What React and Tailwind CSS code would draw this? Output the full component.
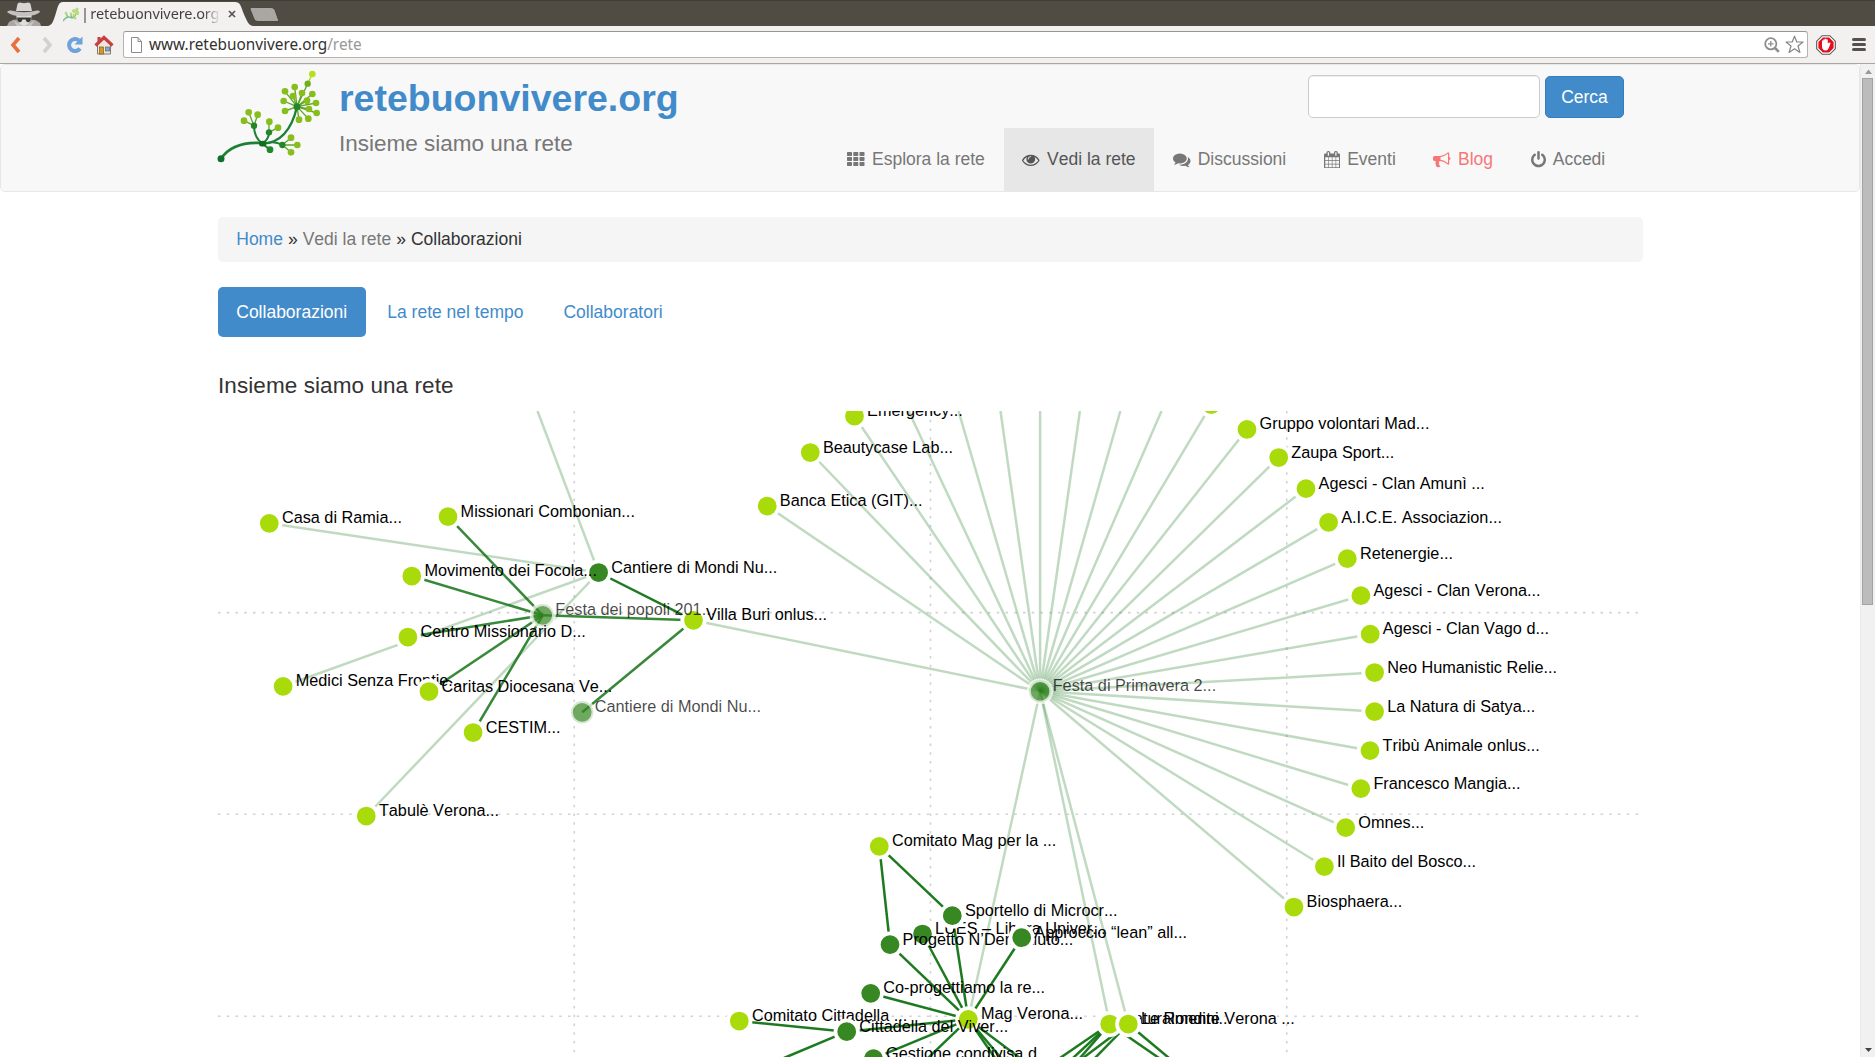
import React from "react";

const LIME = "#a9db0b";
const GREEN = "#378722";

/* Network data, in page coordinates */
const P = {
  casa: [269.3, 523.3, "Casa di Ramia..."],
  missionari: [448, 516.7, "Missionari Combonian..."],
  movimento: [411.8, 576, "Movimento dei Focola..."],
  cantiere: [598.6, 572.5, "Cantiere di Mondi Nu...", "dark"],
  popoli: [542.7, 615.3, "Festa dei popoli 201...", "faded"],
  villa: [693.5, 620.3, "Villa Buri onlus..."],
  centro: [407.9, 637, "Centro Missionario D..."],
  medici: [283.1, 686.3, "Medici Senza Frontie..."],
  caritas: [429, 691.5, "Caritas Diocesana Ve..."],
  cantiere2: [582.2, 712.3, "Cantiere di Mondi Nu...", "faded"],
  cestim: [473.1, 732.5, "CESTIM..."],
  tabule: [366.3, 816, "Tabulè Verona..."],
  primavera: [1040.1, 691.3, "Festa di Primavera 2...", "faded"],
  emergency: [854.5, 416.2, "Emergency..."],
  beauty: [810.3, 452.5, "Beautycase Lab..."],
  banca: [767.2, 506, "Banca Etica (GIT)..."],
  top: [1211.3, 404.6, ""],
  gruppo: [1247, 429.3, "Gruppo volontari Mad..."],
  zaupa: [1278.7, 457.5, "Zaupa Sport..."],
  amuni: [1306, 488.7, "Agesci - Clan Amunì ..."],
  aice: [1328.6, 522.4, "A.I.C.E. Associazion..."],
  retenergie: [1347.3, 558.7, "Retenergie..."],
  clanVerona: [1360.9, 595.7, "Agesci - Clan Verona..."],
  vago: [1370.2, 634.2, "Agesci - Clan Vago d..."],
  neo: [1374.6, 672.5, "Neo Humanistic Relie..."],
  natura: [1374.6, 711.6, "La Natura di Satya..."],
  tribu: [1370, 750.6, "Tribù Animale onlus..."],
  francesco: [1360.8, 788.7, "Francesco Mangia..."],
  omnes: [1345.7, 827.7, "Omnes..."],
  baito: [1324.4, 866.7, "Il Baito del Bosco..."],
  bio: [1294, 907, "Biosphaera..."],
  mag: [968.3, 1019.3, "Mag Verona..."],
  comitatoMag: [879.3, 846.3, "Comitato Mag per la ..."],
  lues: [922.5, 934, "LUES – Libera Univer..."],
  progetto: [890, 944.6, "Progetto N’Dem Aiuto..."],
  sportello: [952.3, 915.7, "Sportello di Microcr..."],
  approccio: [1021.7, 937.7, "Approccio “lean” all..."],
  coprog: [870.7, 993.3, "Co-progettiamo la re..."],
  comitatoCitt: [739.3, 1021, "Comitato Cittadella ..."],
  cittadella: [846.7, 1031.7, "Cittadella del Viver..."],
  gestione: [873.5, 1058.6, "Gestione condivisa d..."],
  naturalmente: [1109.7, 1024, "Naturalmente Verona ..."],
  rondini: [1128.3, 1024, "Le Rondini..."],
};

const DARK = new Set([
  "lues", "progetto", "sportello", "approccio", "coprog", "cittadella", "gestione", "cantiere",
]);

const ORDER = [
  "cantiere", "casa", "missionari", "movimento", "villa", "popoli", "centro", "medici", "caritas",
  "cantiere2", "cestim", "tabule", "primavera", "emergency", "beauty", "banca", "top", "gruppo",
  "zaupa", "amuni", "aice", "retenergie", "clanVerona", "vago", "neo", "natura", "tribu",
  "francesco", "omnes", "baito", "bio", "mag", "comitatoMag", "lues", "progetto", "sportello",
  "approccio", "coprog", "comitatoCitt", "cittadella", "gestione", "naturalmente", "rondini",
];

const LIGHT = [
  ...[
    "villa", "emergency", "beauty", "banca", "top", "gruppo", "zaupa", "amuni", "aice",
    "retenergie", "clanVerona", "vago", "neo", "natura", "tribu", "francesco", "omnes", "baito",
    "bio", "mag", "naturalmente", "rondini",
    [908.6, 411], [958.5, 411], [1000.5, 411], [1040.1, 411], [1079.9, 411], [1120.4, 411],
    [1161.5, 411],
  ].map((t) => ["primavera", t]),
  ["cantiere", "casa"],
  ["cantiere", "medici"],
  ["cantiere", "tabule"],
  ["cantiere", [537.5, 411]],
];

const MID = [
  ["popoli", "missionari"],
  ["popoli", "movimento"],
  ["popoli", "centro"],
  ["popoli", "caritas"],
  ["popoli", "cestim"],
  ["popoli", "villa"],
  ["villa", "cantiere2"],
];

const FULL = [
  ["cantiere", "villa"],
  ["comitatoMag", "progetto"],
  ["comitatoMag", "sportello"],
  ["sportello", "mag"],
  ["lues", "mag"],
  ["progetto", "mag"],
  ["approccio", "mag"],
  ["coprog", "mag"],
  ["comitatoCitt", "cittadella"],
  ["cittadella", "mag"],
  ["gestione", "mag"],
  ["cittadella", [784, 1058]],
  ["mag", [928, 1058]],
  ["mag", [995, 1058]],
  ["mag", [1001, 1058]],
  ["mag", [1020, 1058]],
  ["naturalmente", [1060, 1058]],
  ["naturalmente", [1073, 1058]],
  ["naturalmente", [1080, 1058]],
  ["rondini", [1083, 1058]],
  ["rondini", [1095, 1058]],
  ["naturalmente", [1159, 1058]],
  ["rondini", [1169, 1058]],
];

const pt = (r) => (typeof r === "string" ? P[r] : r);

function Edges({ list, opacity }) {
  return (
    <g stroke="#0b6f0e" strokeOpacity={opacity} strokeWidth="2.5">
      {list.map(([a, b], i) => {
        const [x1, y1] = pt(a);
        const [x2, y2] = pt(b);
        return <line key={i} x1={x1} y1={y1} x2={x2} y2={y2} />;
      })}
    </g>
  );
}

function Network() {
  return (
    <svg
      className="block shrink-0 [font-kerning:none]"
      width="1425"
      height="646"
      viewBox="218 411 1425 646"
      fontFamily='"Liberation Sans", Arial, sans-serif'
      fontSize="16.25"
    >
      <g stroke="#d2d2d2" strokeWidth="1.6" strokeDasharray="2.5 6.25">
        {[574.25, 930.5, 1286.75].map((x) => (
          <line key={x} x1={x} x2={x} y1="411" y2="1057" />
        ))}
        {[612.6, 814.3, 1016.2].map((y) => (
          <line key={y} x1="218" x2="1639" y1={y} y2={y} />
        ))}
      </g>
      <Edges list={LIGHT} opacity={0.26} />
      <Edges list={MID} opacity={0.82} />
      <Edges list={FULL} opacity={0.92} />
      {ORDER.map((k) => {
        const [x, y, label, kind] = P[k];
        const faded = kind === "faded";
        const opacity = faded ? 0.72 : 1;
        return (
          <g key={k} fillOpacity={opacity} strokeOpacity={opacity}>
            <circle
              cx={x}
              cy={y}
              r="11.25"
              fill={faded || DARK.has(k) ? GREEN : LIME}
              stroke="#fff"
              strokeWidth="3.75"
            />
            <text x={x + 12.6} y={y + 0.1} fill="#000">
              {label}
            </text>
          </g>
        );
      })}
    </svg>
  );
}

const LOGO_TIPS = [
  [287, 56], [248, 66], [219, 79], [243, 93], [270, 84], [301, 87], [215, 108], [285, 107],
  [312, 114], [219, 138], [291, 132], [314, 144], [261, 164], [289, 161],
];

function Logo() {
  return (
    <svg className="-ml-1.5 block shrink-0" width="120" height="105" viewBox="0 0 360 315">
      <g fill="none" stroke="#5fa526" strokeWidth="4">
        {LOGO_TIPS.map(([x, y]) => (
          <path key={`${x}-${y}`} d={`M255 125L${x} ${y}`} />
        ))}
        <path d="M287 56L301 27" stroke="#a9db0b" />
        <path d="M126 182L110 142M126 182L96 167M126 182L137 149M171 202V170M171 202L198 188M211 240L237 218M211 240L256 240M211 240L237 262" />
      </g>
      <g fill="none" stroke="#1d8036" strokeLinecap="round">
        <path d="M27 281Q62 228 152 234" strokeWidth="8" />
        <path d="M152 236Q230 232 255 125" strokeWidth="7" />
        <path d="M152 236Q126 218 126 182M152 236Q171 222 171 202M165 234Q190 228 211 240M152 236L174 254" strokeWidth="6" />
      </g>
      <g fill="#86bf1b">
        {LOGO_TIPS.slice(1).map(([x, y]) => (
          <circle key={`${x}-${y}`} cx={x} cy={y} r="10" />
        ))}
        {[[110, 142], [96, 167], [137, 149], [172, 170], [198, 188], [237, 218], [256, 240], [237, 262]].map(([x, y]) => (
          <circle key={`${x}-${y}`} cx={x} cy={y} r="10" />
        ))}
        <circle cx="287" cy="56" r="9.5" fill="#6fae1e" />
        <circle cx="301" cy="27" r="10" fill="#b7e01c" />
      </g>
      <g fill="#23862a">
        <circle cx="255" cy="125" r="10.5" />
        <circle cx="126" cy="182" r="9.5" />
        <circle cx="171" cy="202" r="9.5" />
        <circle cx="211" cy="240" r="9.5" />
        <circle cx="174" cy="254" r="10" />
        <ellipse cx="152" cy="236" rx="11" ry="8.5" fill="#0f6f1d" />
        <circle cx="27" cy="281" r="10.5" fill="#0f6f2a" />
      </g>
    </svg>
  );
}

function Glyph({ d, x = 0, w = 1792 }) {
  return (
    <svg
      className="h-[17.5px] shrink-0"
      style={{ width: (w / 1792) * 17.5 }}
      viewBox={`${x} 0 ${w} 1792`}
      fill="currentColor"
    >
      <path d={d} />
    </svg>
  );
}

const thPath = [96, 608, 1120]
  .flatMap((y) =>
    [0, 640, 1280].map(
      (x) => `M${x + 70} ${y}h372q70 0 70 70v264q0 70-70 70h-372q-70 0-70-70v-264q0-70 70-70z`
    )
  )
  .join("");

const NAV = [
  { label: "Esplora la rete", d: thPath },
  {
    label: "Vedi la rete",
    active: true,
    d: "M1664 960q-152-236-381-353 61 104 61 225 0 185-131.500 316.500t-316.500 131.500-316.500-131.500-131.500-316.500q0-121 61-225-229 117-381 353 133 205 333.500 326.500t434.500 121.500 434.500-121.500 333.500-326.500zm-720-384q0-20-14-34t-34-14q-125 0-214.500 89.500t-89.500 214.500q0 20 14 34t34 14 34-14 14-34q0-86 61-147t147-61q20 0 34-14t14-34zm848 384q0 34-20 69-140 230-376.500 368.500t-499.500 138.500-499.500-139-376.500-368q-20-35-20-69t20-69q140-229 376.500-368t499.500-139 499.500 139 376.500 368q20 35 20 69z",
  },
  {
    label: "Discussioni",
    d: "M1408 768q0 139-94 257t-256.500 186.500-353.500 68.500q-86 0-176-16-124 88-278 128-36 9-86 16h-3q-11 0-20.500-8t-11.500-21q-1-3-1-6.500t.5-6.500 2-6l2.500-5 3.500-5.500 4-5 4.500-5 4-4.500q5-6 23-25t26-29.500 22.500-29 25-38.500 20.500-44q-124-72-195-177t-71-224q0-139 94-257t256.500-186.500 353.500-68.500 353.500 68.500 256.500 186.500 94 257zm384 256q0 120-71 224.500t-195 176.500q10 24 20.500 44t25 38.500 22.500 29 26 29.500 23 25q1 1 4 4.500t4.500 5 4 5 3.500 5.500l2.500 5 2 6 .5 6.500-1 6.500q-3 14-13 22t-22 7q-50-7-86-16-154-40-278-128-90 16-176 16-271 0-472-132 58 4 88 4 161 0 309-45t264-129q125-92 192-212t67-254q0-77-23-152 129 71 204 178t75 230z",
  },
  {
    label: "Eventi",
    x: 64,
    w: 1664,
    d: "M192 1664h288v-288h-288v288zm352 0h320v-288h-320v288zm-352-352h288v-320h-288v320zm352 0h320v-320h-320v320zm-352-384h288v-288h-288v288zm736 736h320v-288h-320v288zm-384-736h320v-288h-320v288zm768 736h288v-288h-288v288zm-384-352h320v-320h-320v320zm-352-864v-288q0-13-9.500-22.500t-22.500-9.500h-64q-13 0-22.500 9.500t-9.500 22.500v288q0 13 9.500 22.500t22.500 9.500h64q13 0 22.500-9.500t9.500-22.500zm736 864h288v-320h-288v320zm-384-384h320v-288h-320v288zm384 0h288v-288h-288v288zm32-480v-288q0-13-9.500-22.500t-22.500-9.500h-64q-13 0-22.500 9.500t-9.500 22.500v288q0 13 9.500 22.500t22.500 9.500h64q13 0 22.500-9.500t9.500-22.500zm384-64v1280q0 52-38 90t-90 38h-1408q-52 0-90-38t-38-90v-1280q0-52 38-90t90-38h128v-96q0-66 47-113t113-47h64q66 0 113 47t47 113v96h384v-96q0-66 47-113t113-47h64q66 0 113 47t47 113v96h128q52 0 90 38t38 90z",
  },
  {
    label: "Blog",
    red: true,
    d: "M1664 640q53 0 90.500 37.500t37.500 90.500-37.500 90.500-90.500 37.500v384q0 52-38 90t-90 38q-417-347-812-380-58 19-91 66t-31 100.500 40 92.500q-20 33-23 65.500t6 58 33.500 55 48 50 61.500 50.500q-29 58-111.500 83t-168.500 11.500-132-55.500q-7-23-29.500-87.500t-32-94.500-23-89-15-101 3.500-98.500 22-110.500h-122q-66 0-113-47t-47-113v-192q0-66 47-113t113-47h480q435 0 896-384 52 0 90 38t38 90v384zm-128 604v-954q-394 302-768 343v270q377 42 768 341z",
  },
  {
    label: "Accedi",
    x: 128,
    w: 1536,
    d: "M1664 896q0 156-61 298t-164 245-245 164-298 61-298-61-245-164-164-245-61-298q0-182 80.500-343t226.500-270q43-32 95.500-25t83.500 50q32 42 24.500 94.500t-49.500 84.500q-98 74-151.500 181t-53.500 228q0 104 40.500 198.500t109.500 163.500 163.500 109.500 198.500 40.500 198.500-40.500 163.500-109.500 109.500-163.500 40.500-198.500q0-121-53.500-228t-151.500-181q-42-32-49.500-84.500t24.500-94.500q31-43 84-50t95 25q146 109 226.500 270t80.500 343zm-640-768v640q0 52-38 90t-90 38-90-38-38-90v-640q0-52 38-90t90-38 90 38 38 90z",
  },
];

function TabStrip() {
  return (
    <div className="flex h-[26px] shrink-0 items-end border-t border-[#403d38] bg-[#504c44]">
      <svg className="ml-[7px] h-[25px] w-[34px] shrink-0" viewBox="0 0 34 25">
        <path d="M0 25L2 21C6 18 10 18 12 19H22C26 18 30 19 33 22L34 25Z" fill="#a9a7a4" />
        <path d="M9 12H25L24 19Q22 24 17 25Q12 24 10 19Z" fill="#dededd" />
        <path d="M9 10L10.500 3Q11 1.500 13 1.500Q17 3 21 1.500Q23 1.500 23.500 3L25 10Z" fill="#d8d6d4" />
        <path d="M0 11Q1 9 4 9.500Q17 13 30 9.500Q33 9 33 11Q30 14.500 17 15.500Q4 15 0 11Z" fill="#c4c2c0" />
        <path d="M10 16.500H24L23.500 20Q20 23 18.500 18.500H15.500Q14 23 10.500 20Z" fill="#3b3833" />
        <path d="M6 19L15 25H19L28 19L24 25H10Z" fill="#c9c7c5" />
      </svg>
      <div className="relative ml-[7px] flex h-6 w-[207px] items-center">
        <svg className="absolute inset-0" width="207" height="24" viewBox="0 0 207 24">
          <path d="M0 24C4 23 5 20 7 14C10 5 10 0 15 0H187C192 0 193 4 195 10C199 19 200 23 205 24Z" fill="#f2f1f0" />
        </svg>
        <svg className="relative ml-[15px] h-[17px] w-[17px] shrink-0" viewBox="0 0 17 17">
          <path d="M0 15Q4 9 9 12Q13 11 14 4M5 12L3 7M9 12L8 8" fill="none" stroke="#7fc08a" strokeWidth="1.500" />
          <g fill="#b9dc7e">
            <circle cx="14" cy="3" r="1.600" /><circle cx="11" cy="5" r="2" /><circle cx="14" cy="7" r="2.200" />
            <circle cx="3" cy="7" r="1.500" /><circle cx="8" cy="8" r="1.400" /><circle cx="12" cy="12" r="1.500" />
            <circle cx="11" cy="9" r="1.300" />
          </g>
        </svg>
        <div className="relative -mt-0.5 ml-px w-[139px] overflow-hidden whitespace-nowrap bg-gradient-to-r from-[#403f3d] from-88% to-[#f2f1f0] bg-clip-text font-['Noto_Sans',sans-serif] text-[14.5px] leading-6 tracking-[-0.1px] text-transparent [word-spacing:-2.2px]">
          | retebuonvivere.org
        </div>
        <svg className="relative ml-2 h-2 w-2 shrink-0" viewBox="0 0 8 8">
          <path d="M1 1L7 7M7 1L1 7" stroke="#555" strokeWidth="1.700" />
        </svg>
      </div>
      <svg className="mb-[4.500px] ml-[-6px] h-[15px] w-[31px]" viewBox="0 0 31 15">
        <path d="M2 0.500H22Q25 0.500 26 3L30 14.500H9Q6 14.500 5 12L1 2Q1 0.500 2 0.500Z" fill="#aaa7a3" stroke="#3f3c37" strokeWidth="0.800" />
      </svg>
    </div>
  );
}

function Toolbar() {
  return (
    <div className="flex h-[38px] shrink-0 items-center border-b border-[#a9a6a3] bg-[#f2f1f0]">
      <svg className="ml-[9px] h-[18px] w-[14px]" viewBox="0 0 14 18">
        <path d="M10 2L4 9L10 16" fill="none" stroke="#e8703a" strokeWidth="3.600" />
      </svg>
      <svg className="ml-[19px] h-[18px] w-[12px]" viewBox="0 0 12 18">
        <path d="M2 2L8 9L2 16" fill="none" stroke="#d3d1cf" strokeWidth="3.600" />
      </svg>
      <svg className="ml-3 h-[18px] w-[18px]" viewBox="0 0 18 18">
        <path d="M14 12.500A6 6 0 1 1 13 4.500" fill="none" stroke="#6da2dc" strokeWidth="4" />
        <path d="M16.500 0.500V8.500H8.500Z" fill="#6da2dc" />
      </svg>
      <svg className="ml-2.5 h-[20px] w-5" viewBox="0 0 20 20">
        <path d="M3.500 9L10 4L16.500 9V19H3.500Z" fill="#ece6dd" stroke="#7d7a76" />
        <rect x="5.500" y="12" width="4" height="7" fill="#d9962c" stroke="#8a5a16" strokeWidth="0.700" />
        <rect x="11.500" y="12" width="4" height="4" fill="#86a9cf" stroke="#666" strokeWidth="0.700" />
        <path d="M1.500 10.500L10 2.500L18.500 10.500" fill="none" stroke="#c83f40" strokeWidth="3.200" />
        <rect x="3.500" y="2" width="3" height="4" fill="#c83f40" />
      </svg>
      <div className="ml-[9px] flex h-[27px] w-[1685px] items-center rounded-[3px] border border-[#b5b2af] border-t-[#99968f] bg-white">
        <svg className="ml-[7px] h-4 w-[11px]" viewBox="0 0 11 16">
          <path d="M0.500 0.500H7L10.500 4.500V15.500H0.500ZM7 0.500V4.500H10.500" fill="#fff" stroke="#8b8b8b" />
        </svg>
        <div className="-mt-0.5 ml-[7px] flex-1 font-['Noto_Sans',sans-serif] text-[15.35px] leading-6 text-[#33312f]">
          www.retebuonvivere.org<span className="text-[#9a9896]">/rete</span>
        </div>
        <svg className="h-4 w-4" viewBox="0 0 16 16">
          <g fill="none" stroke="#8e8e8e" strokeWidth="1.800">
            <circle cx="6.800" cy="6.800" r="5.600" />
            <path d="M11 11L14.800 14.800" strokeWidth="2.600" />
            <path d="M6.800 4V9.600M4 6.800H9.600" strokeWidth="1.300" />
          </g>
        </svg>
        <svg className="ml-[5px] mr-[3px] h-[19px] w-[19px]" viewBox="0 0 19 19">
          <path d="M9.500 1.200L11.800 7H18L13 11L14.900 17.400L9.500 13.800L4.100 17.400L6 11L1 7H7.200Z" fill="#fff" stroke="#858585" strokeWidth="1.200" strokeLinejoin="round" />
        </svg>
      </div>
      <svg className="ml-2 h-5 w-5" viewBox="0 0 20 20">
        <path d="M6.200 0.700H13.800L19.300 6.200V13.800L13.800 19.300H6.200L0.700 13.800V6.200Z" fill="#fff" stroke="#555" strokeWidth="1.100" />
        <path d="M6.900 2.400H13.100L17.600 6.900V13.100L13.100 17.600H6.900L2.400 13.100V6.900Z" fill="#e3101b" />
        <path d="M6 9V5.500H7.300V4.400H8.800V3.800H10.300V4.400H11.800V8.500L13 7.500L14.600 8L13 12.500Q12 15.500 9.800 15.500Q6.500 15.500 6 12Z" fill="#fff" />
      </svg>
      <div className="ml-[16px] flex w-[14px] flex-col gap-[2px]">
        <div className="h-[3px] rounded-sm bg-[#54514e]" />
        <div className="h-[3px] rounded-sm bg-[#54514e]" />
        <div className="h-[3px] rounded-sm bg-[#54514e]" />
      </div>
    </div>
  );
}

function Header() {
  return (
    <header className="h-32 rounded-[5px] border border-[#e7e7e7] bg-[#f8f8f8]">
      <div className="ml-[217px] flex h-full w-[1425px]">
        <Logo />
        <div className="ml-[7px] pt-[11px]">
          <div className="text-[37.5px] font-bold leading-[44px] text-[#428bca]">retebuonvivere.org</div>
          <div className="mt-2 text-[22.5px] leading-[31px] text-[#777]">Insieme siamo una rete</div>
        </div>
        <div className="ml-auto flex flex-col items-end justify-between pr-[19px]">
          <div className="mt-[10px] flex items-center gap-[5px]">
            <div className="h-[43px] w-[232px] rounded-[5px] border border-[#ccc] bg-white shadow-[inset_0_1px_1px_rgba(0,0,0,0.075)]" />
            <button className="h-[42px] w-[79px] rounded-[5px] border border-[#357ebd] bg-[#428bca] pt-px text-white">
              Cerca
            </button>
          </div>
          <nav className="flex h-[63px] [font-kerning:none]">
            {NAV.map((n) => (
              <a
                key={n.label}
                className={
                  "flex items-center gap-[7.2px] whitespace-nowrap px-[18.75px] " +
                  (n.active ? "bg-[#e7e7e7] text-[#555]" : n.red ? "text-[#f77777]" : "text-[#777]")
                }
              >
                <Glyph d={n.d} x={n.x} w={n.w} />
                {n.label}
              </a>
            ))}
          </nav>
        </div>
      </div>
    </header>
  );
}

function Scrollbar() {
  return (
    <div className="flex w-[15px] shrink-0 flex-col items-center border-l border-[#e9e9e9] bg-[#f1f1f1]">
      <svg className="my-[4.500px] h-[5px] w-[7px] shrink-0" viewBox="0 0 7 5">
        <path d="M0 5L3.500 0.500L7 5Z" fill="#999" />
      </svg>
      <div className="mr-[1.500px] h-[527px] w-[11px] border border-[#a3a3a3] bg-[#bcbcbc]" />
      <svg className="mb-[5px] mt-auto h-[4px] w-[7px] shrink-0" viewBox="0 0 7 4">
        <path d="M0 0H7L3.500 4Z" fill="#444" />
      </svg>
    </div>
  );
}

export default function App() {
  return (
    <div className="flex h-[1057px] w-[1875px] flex-col overflow-hidden bg-white font-['Liberation_Sans',Arial,sans-serif] text-[17.5px] leading-[25px] text-[#333]">
      <TabStrip />
      <Toolbar />
      <div className="flex min-h-0 flex-1">
        <div className="flex min-w-0 flex-1 flex-col overflow-hidden">
          <Header />
          <main className="ml-[218px] w-[1425px]">
            <div className="mt-[25px] flex h-[45px] items-center gap-[5px] rounded-[5px] bg-[#f5f5f5] px-[18.25px] [font-kerning:none]">
              <a className="text-[#428bca]">Home</a>
              <span>»</span>
              <span className="text-[#777]">Vedi la rete</span>
              <span>»</span>
              <span>Collaborazioni</span>
            </div>
            <div className="mt-[25px] flex h-[50px] gap-[2.5px] text-[#428bca]">
              <a className="flex w-[148px] items-center rounded-[5px] bg-[#428bca] pl-[18.25px] text-white">Collaborazioni</a>
              <a className="flex items-center px-[18.75px]">La rete nel tempo</a>
              <a className="flex items-center px-[18.75px]">Collaboratori</a>
            </div>
            <h4 className="mb-[13px] mt-[36px] text-[22.5px] leading-[25px] tracking-[0.08px]">Insieme siamo una rete</h4>
            <Network />
          </main>
        </div>
        <Scrollbar />
      </div>
    </div>
  );
}
